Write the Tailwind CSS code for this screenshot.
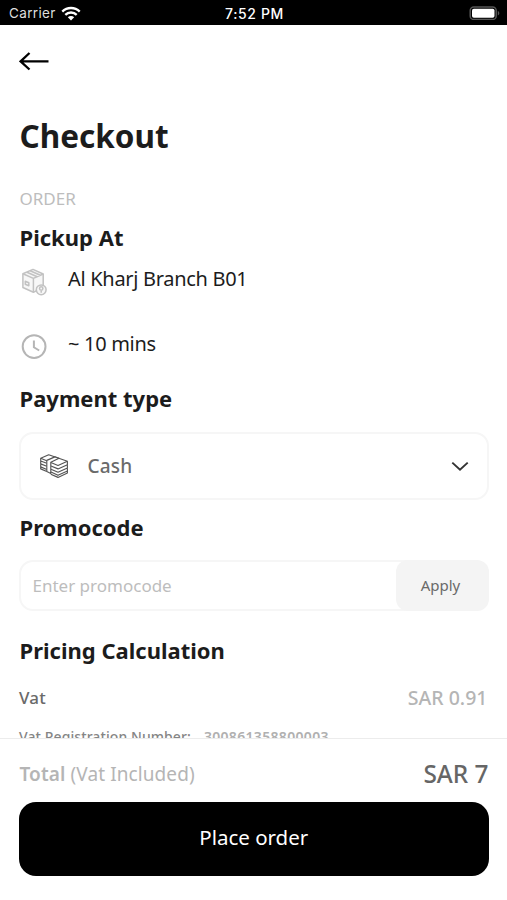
<!DOCTYPE html>
<html lang="en">
<head>
<meta charset="utf-8">
<meta name="viewport" content="width=device-width, initial-scale=1">
<title>Checkout</title>
<script src="https://cdn.jsdelivr.net/npm/@tailwindcss/browser@4"></script>
</head>
<body class="bg-white">
<div class="flex h-[900px] w-[507px] flex-col overflow-hidden bg-white font-['Noto_Sans',sans-serif] text-[#1c1c1c]">
  <header class="grid h-[25px] shrink-0 grid-cols-3 items-center bg-black pr-[7px] pl-[9px] font-['Inter',sans-serif] text-[14px] text-white">
    <div class="flex items-center gap-[5px] pt-[2px]">
      <span class="w-[47px] text-[13.5px] tracking-[0.35px] text-[#dedede]">Carrier</span>
      <svg class="-mt-[1px] h-[15px] w-[20px]" viewBox="0 0 19 14" fill="none" stroke="#fff" stroke-width="2.2"><path d="M1.2 5.2a11.8 11.8 0 0 1 16.6 0M4.1 8.3a7.6 7.6 0 0 1 10.8 0"/><path d="M9.5 13.6 6.5 10.6a4.2 4.2 0 0 1 6 0z" fill="#fff" stroke="none"/></svg>
    </div>
    <span class="pt-[2px] text-center font-medium tracking-[0.6px] whitespace-nowrap">7:52 PM</span>
    <svg class="h-[15px] w-[31px] justify-self-end" viewBox="0 0 31 15"><rect x="1.2" y="1.9" width="26" height="12.6" rx="3.6" fill="none" stroke="#555" stroke-width="1.5"/><rect x="3" y="3.7" width="22.5" height="9" rx="1.8" fill="#fff"/><path d="M28.8 6c2 .7 2 3.7 0 4.4z" fill="#555"/></svg>
  </header>

  <main class="flex min-h-0 flex-1 flex-col overflow-hidden pr-[18.5px] pl-[19px]">
    <div class="flex h-[72px] shrink-0 items-center">
      <svg class="h-[20px] w-[30px]" viewBox="0 0 30 20" fill="none" stroke="#000" stroke-width="2.3"><path d="M29.5 10.4H1.5M10.5 2 1.6 10.4l8.9 8.1"/></svg>
    </div>
    <h1 class="h-[78px] shrink-0 pl-[0.5px] text-[31.5px] leading-[78px] font-bold">Checkout</h1>
    <p class="h-[46px] shrink-0 pl-[0.5px] text-[17px] leading-[47px] text-[#bdbdbd]">ORDER</p>
    <h2 class="h-[34px] shrink-0 pl-[0.5px] text-[22px] leading-[33px] font-bold">Pickup At</h2>
    <div class="flex h-[48px] shrink-0 items-start gap-[19px]">
      <svg class="mt-[12px] h-[30px] w-[30px]" viewBox="0 0 30 30" fill="none" stroke="#c2c2c2" stroke-width="1.5" stroke-linejoin="round"><path d="M3.9 6.8 14 2.4 24.2 7v13L14.4 25.3 3.9 20.5z" fill="#f7f7f7"/><path d="M3.9 6.8 14.4 11.4 24.2 7M14.4 11.4v13.6M8 5.3l10.2 4.4M11.2 3.8 21.3 8.3M6.3 17.3v-3l3.5 1.5v3z"/><circle cx="22.2" cy="22.8" r="4.9" fill="#f7f7f7"/><path d="M22.2 25.8v-2.6M22.2 19.8a1.7 1.7 0 1 1 0 3.4 1.7 1.7 0 0 1 0-3.4z"/></svg>
      <span class="text-[20px] leading-[48px] tracking-[-0.3px]">Al Kharj Branch B01</span>
    </div>
    <div class="flex h-[75px] shrink-0 items-start gap-[19px] pt-[17px]">
      <svg class="mt-[11px] h-[30px] w-[30px]" viewBox="0 0 30 30" fill="none" stroke="#b5b5b5" stroke-width="2"><circle cx="15.1" cy="15.6" r="11.4"/><path d="M14.9 9.5v6.8l5.3 3.2"/></svg>
      <span class="text-[20px] leading-[48px] tracking-[-0.3px]">~ 10 mins</span>
    </div>
    <h2 class="h-[42px] shrink-0 pl-[0.5px] text-[22px] leading-[41px] font-bold">Payment type</h2>
    <div class="mt-[12px] flex h-[68px] shrink-0 items-center rounded-[14px] border-2 border-[#f6f6f6] px-[18px] text-[#6a6a6a]">
      <svg class="h-[26px] w-[30px]" viewBox="0 0 30 26" fill="none" stroke="#555" stroke-width="1.15" stroke-linejoin="round"><path d="M1.7 5.2 9.7 1.8 28.4 8.2 19 12.5z"/><path d="M1.7 5.2v2.8l6.1 2.3M1.7 8.3v2.6l6.1 2.4M1.7 11.4v2.5l6.1 2.6M1.7 13.9v2l6.1 2.6M12 13l7 2.9 9.4-4.2V8.2M12 16.2l7 3 9.4-4.3v-2.6M12 18.9l7 3.4 9.4-4.3v-2.6M28.4 18v1.9L19 24.4l-7.2-3.2"/><path d="M7.8 7.4 15.9 3.9 20 5.3l-8.2 3.9v11.2l-4-1.8z" fill="#fff"/></svg>
      <span class="ml-[18.5px] text-[19px] font-medium tracking-[0.2px]">Cash</span>
      <svg class="ml-auto h-[12px] w-[18px]" viewBox="0 0 18 12" fill="none" stroke="#333" stroke-width="1.9"><path d="m1.3 2.6 7.7 7.2 7.7-7.2"/></svg>
    </div>
    <h2 class="h-[60px] shrink-0 pl-[0.5px] text-[22px] leading-[54px] font-bold">Promocode</h2>
    <div class="flex h-[51px] shrink-0 rounded-[14px] border-2 border-[#f6f6f6]">
      <span class="flex-1 pl-[11.5px] text-[17px] leading-[48px] text-[#bdbdbd]">Enter promocode</span>
      <button class="-m-[2px] w-[93px] rounded-[12px] bg-[#f4f4f4] pr-[3px] text-[15px] text-[#6a6a6a]">Apply</button>
    </div>
    <h2 class="h-[80px] shrink-0 pl-[0.5px] text-[22px] leading-[79px] font-bold">Pricing Calculation</h2>
    <div class="-mt-[8px] flex h-[30px] shrink-0 items-center justify-between text-[#6a6a6a]">
      <span class="text-[17px] font-medium tracking-[0.2px]">Vat</span>
      <span class="pr-px text-[19.5px] font-medium text-[#b5b5b5]">SAR 0.91</span>
    </div>
    <div class="mt-[12px] flex h-[24px] shrink-0 gap-[13px] text-[14px] leading-[24px] font-medium text-[#858585]">
      <span class="tracking-[0.08px]">Vat Registration Number:</span><span class="font-semibold tracking-[0.32px] text-[#b0b0b0]">300861358800003</span>
    </div>
  </main>

  <footer class="h-[162px] shrink-0 border-t border-[#ececec] bg-white pr-[18.5px] pl-[19px]">
    <div class="flex h-[63px] items-center justify-between pt-[8px]">
      <span class="pl-[0.5px] text-[19px] tracking-[0.1px] text-[#b5b5b5]"><b class="font-semibold">Total</b> (Vat Included)</span>
      <span class="text-[24.4px] font-medium text-[#666]">SAR 7</span>
    </div>
    <button class="h-[73.5px] w-full rounded-[17px] bg-black pb-[2px] text-[20.5px] text-white">Place order</button>
  </footer>
</div>
</body>
</html>
